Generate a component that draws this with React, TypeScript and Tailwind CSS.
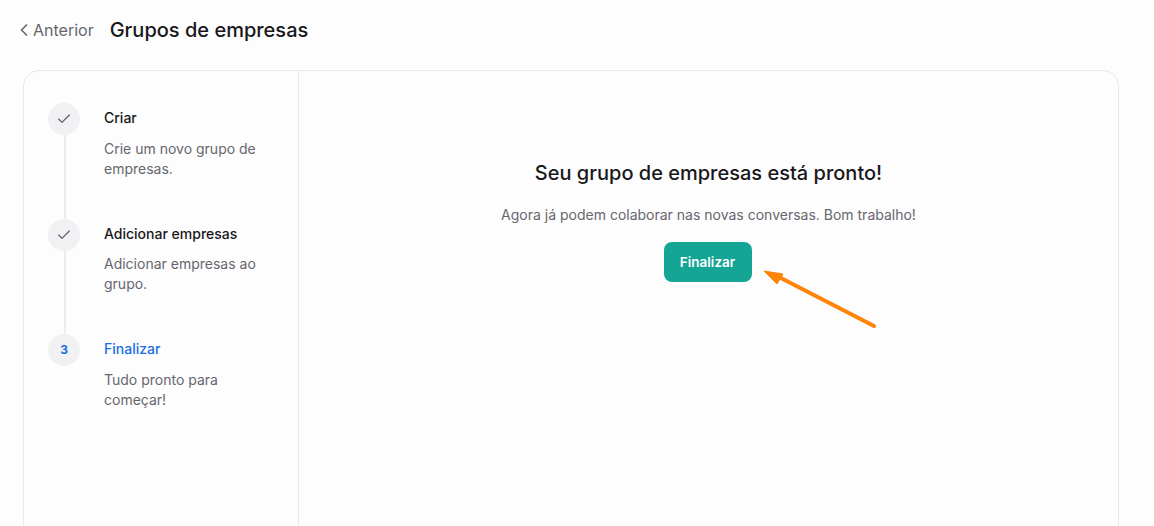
import { Check, ChevronLeft } from 'lucide-react';

const steps = [
  { title: 'Criar', text: ['Crie um novo grupo de', 'empresas.'], done: true },
  { title: 'Adicionar empresas', text: ['Adicionar empresas ao', 'grupo.'], done: true },
  { title: 'Finalizar', text: ['Tudo pronto para', 'começar!'], done: false },
];

export default function App() {
  return (
    <div className="relative h-[526px] w-[1154px] overflow-hidden bg-[#fdfdfd] font-['Inter',sans-serif]">
      <header className="flex h-[70px] items-center pb-[11px] pl-[14px]">
        <button className="flex items-center text-base text-[#66666f]">
          <ChevronLeft className="h-5 w-5 text-[#66666f]" strokeWidth={2} />
          <span className="-ml-px">Anterior</span>
        </button>
        <h1 className="ml-4 text-xl font-medium text-[#18181b]">Grupos de empresas</h1>
      </header>

      <div className="ml-[23px] flex h-[500px] w-[1096px] rounded-2xl border border-[#e8e8ea]">
        <aside className="w-[275px] shrink-0 border-r border-[#e8e8ea] pl-6 pt-8">
          {steps.map((step, i) => (
            <div key={step.title} className="flex h-[115.5px] gap-6">
              <div className="flex w-8 shrink-0 flex-col items-center">
                <div className="flex h-8 w-8 shrink-0 items-center justify-center rounded-full bg-[#f1f1f3]">
                  {step.done ? (
                    <Check className="h-4 w-4 text-[#5b5b66]" strokeWidth={1.75} />
                  ) : (
                    <span className="text-xs font-bold text-[#1a6fe0]">{i + 1}</span>
                  )}
                </div>
                {i < 2 && <div className="ml-[2px] w-[2px] flex-1 bg-[#ececef]" />}
              </div>
              <div>
                <div className={`mt-[5px] text-sm leading-5 font-medium ${step.done ? 'text-[#18181b]' : 'text-[#1a6fe0]'}`}>
                  {step.title}
                </div>
                <p className="mt-[10.5px] text-sm leading-5 text-[#66666f]">
                  {step.text[0]}
                  <br />
                  {step.text[1]}
                </p>
              </div>
            </div>
          ))}
        </aside>

        <main className="flex flex-1 flex-col items-center pt-[88px]">
          <h2 className="text-xl leading-7 font-medium text-[#18181b]">Seu grupo de empresas está pronto!</h2>
          <p className="mt-[18px] text-sm leading-5 text-[#66666f]">
            Agora já podem colaborar nas novas conversas. Bom trabalho!
          </p>
          <button className="mt-[17px] mr-[2px] h-10 w-[88px] rounded-lg bg-[#14a594] text-[13.5px] font-semibold text-white">
            Finalizar
          </button>
        </main>
      </div>

      <svg className="absolute top-[262px] left-[755px] h-[75px] w-[130px]" viewBox="0 0 130 75" fill="none">
        <path d="M119 64 L22 14" stroke="#ff8307" strokeWidth="4" strokeLinecap="round" />
        <path d="M9 9 L28 12 L22 22 Z" fill="#ff8307" stroke="#ff8307" strokeWidth="1" strokeLinejoin="round" />
      </svg>
    </div>
  );
}
